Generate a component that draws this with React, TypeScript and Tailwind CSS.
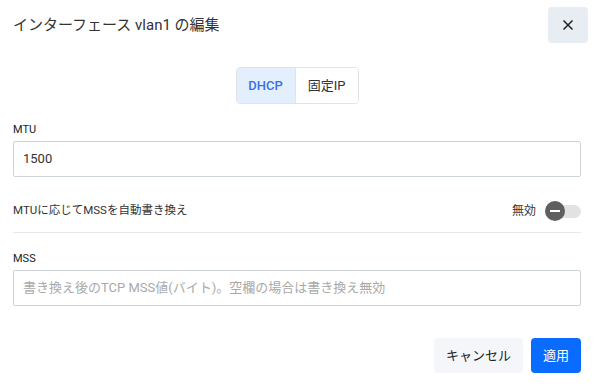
import React from "react";

export default function App() {
  return (
    <div className="w-[594px] h-[387px] bg-white text-[#333] font-['Roboto','Noto_Sans_CJK_JP',sans-serif] flex flex-col">
      <div className="flex items-start justify-between pl-[13px] pr-[6px] pt-[7px]">
        <div className="text-[15px] leading-[36px] text-[#333]">インターフェース vlan1 の編集</div>
        <button className="w-[40px] h-[36px] rounded-[4px] bg-[#e8ecf3] flex items-center justify-center">
          <svg width="12" height="12" viewBox="0 0 12 12">
            <path d="M1.5 1.5 L10.5 10.5 M10.5 1.5 L1.5 10.5" stroke="#222" strokeWidth="1.5" />
          </svg>
        </button>
      </div>
      <div className="flex justify-center mt-[24px]">
        <div className="flex h-[37px] rounded-[4px] border border-[#e3e3e3] overflow-hidden text-[13px]">
          <div className="w-[59px] flex items-center justify-center bg-[#e3effc] text-[#3a6fe6] font-medium border-r border-[#e3e3e3]">DHCP</div>
          <div className="w-[62px] flex items-center justify-center bg-white text-[#333]">固定IP</div>
        </div>
      </div>
      <div className="px-[13px]">
        <div className="mt-[19px] text-[11px] leading-[14px] text-[#222]">MTU</div>
        <div className="mt-[4px] h-[36px] border border-[#cfd4db] rounded-[2px] flex items-center px-[9px] text-[13px] text-[#333]">1500</div>
        <div className="mt-[22px] flex items-center justify-between h-[24px]">
          <div className="text-[11.5px] text-[#333]">MTUに応じてMSSを自動書き換え</div>
          <div className="flex items-center gap-[9px]">
            <span className="text-[12px] text-[#333]">無効</span>
            <div className="relative w-[36px] h-[20px] flex items-center">
              <div className="absolute left-0 right-0 h-[13px] rounded-full bg-[#e2e2e2]" />
              <div className="absolute left-0 w-[20px] h-[20px] rounded-full bg-[#5f5f5f] flex items-center justify-center">
                <div className="w-[10px] h-[2px] bg-white" />
              </div>
            </div>
          </div>
        </div>
        <div className="mt-[9px] h-px bg-[#e4e7ec]" />
        <div className="mt-[19px] text-[11px] leading-[14px] text-[#222]">MSS</div>
        <div className="mt-[4px] h-[36px] border border-[#cfd4db] rounded-[2px] flex items-center px-[9px] text-[13px] text-[#a9a9a9]">書き換え後のTCP MSS値(バイト)。空欄の場合は書き換え無効</div>
        <div className="mt-[32px] flex justify-end gap-[8px]">
          <button className="w-[89px] h-[35px] rounded-[4px] bg-[#f5f6f9] text-[13px] text-[#222]">キャンセル</button>
          <button className="w-[50px] h-[35px] rounded-[4px] bg-[#0a6cff] text-[13px] text-white">適用</button>
        </div>
      </div>
    </div>
  );
}
